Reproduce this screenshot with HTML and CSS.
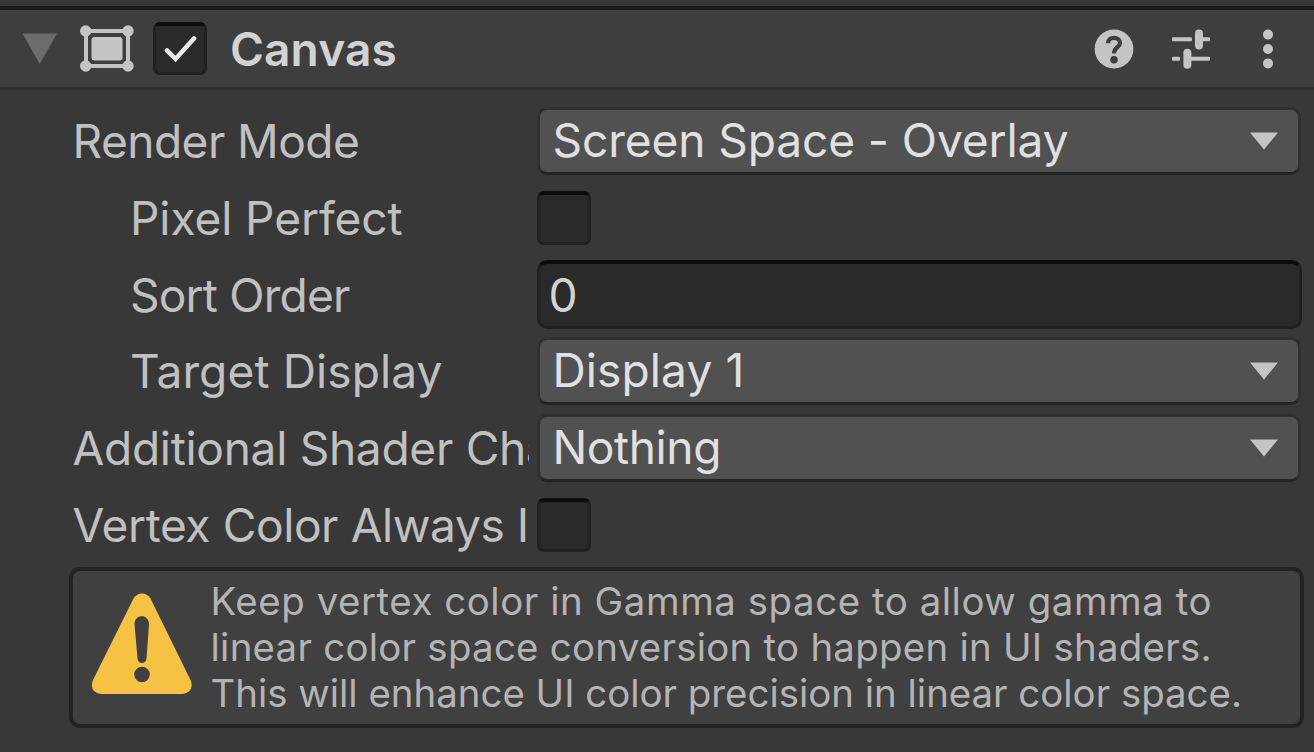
FILE: index.html
```html
<!DOCTYPE html>
<html lang="en">
<head>
<meta charset="utf-8">
<title>Canvas</title>
<link rel="stylesheet" href="styles.css">
</head>
<body>
<main class="inspector">
  <header class="header">
    <svg class="foldout" width="36" height="32" viewBox="0 0 36 32"><path d="M0.5 0.5H35L17.7 31Z" fill="#6c6c6c"/></svg>
    <svg class="canvas-icon" width="54" height="48" viewBox="0 0 54 48">
      <g fill="#c4c4c4"><circle cx="5.700" cy="6" r="5.700"/><circle cx="48" cy="6" r="5.700"/><circle cx="5.700" cy="41" r="5.700"/><circle cx="48" cy="41" r="5.700"/><rect x="11.500" y="12" width="31" height="23.500" rx="3"/></g>
      <rect x="6" y="6" width="42" height="35" fill="none" stroke="#c4c4c4" stroke-width="4"/>
    </svg>
    <span class="checkbox"><svg width="34" height="28" viewBox="0 0 34 28"><path d="M4 15.500L12.500 24L31 3.500" fill="none" stroke="#e8e8e8" stroke-width="4.600" stroke-linecap="round"/></svg></span>
    <h1 class="title">Canvas</h1>
    <svg class="help" width="40" height="40" viewBox="0 0 40 40"><circle cx="20" cy="20" r="19.400" fill="#c4c4c4"/><path d="M14 14.200C14 10.600 16.800 8.800 20 8.800C23.600 8.800 26 11 26 14C26 18.400 20 18.200 20 24.500" fill="none" stroke="#3e3e3e" stroke-width="4.200"/><circle cx="20" cy="30.700" r="3.800" fill="#3e3e3e"/></svg>
    <svg class="presets" width="40" height="40" viewBox="0 0 40 40"><g fill="#c4c4c4"><rect x="1" y="8.300" width="20" height="4" rx="1"/><rect x="28" y="8.300" width="11" height="4" rx="1"/><rect x="24" y="0.500" width="8" height="20" rx="4"/><rect x="1" y="27.700" width="8" height="4" rx="1"/><rect x="16" y="27.700" width="23" height="4" rx="1"/><rect x="12.400" y="19.700" width="8" height="20" rx="4"/></g></svg>
    <svg class="more" width="12" height="40" viewBox="0 0 12 40"><g fill="#c4c4c4"><circle cx="6" cy="5.600" r="5"/><circle cx="6" cy="20" r="5"/><circle cx="6" cy="34.400" r="5"/></g></svg>
  </header>
  <section class="fields">
    <div class="row"><span class="label render-mode">Render Mode</span><div class="dropdown"><span>Screen Space - Overlay</span><svg width="28" height="18" viewBox="0 0 28 18"><path d="M0 0.500H28L14 17.500Z" fill="#c4c4c4"/></svg></div></div>
    <div class="row"><span class="label nested">Pixel Perfect</span><span class="checkbox"></span></div>
    <div class="row"><span class="label nested sort-order">Sort Order</span><div class="input">0</div></div>
    <div class="row"><span class="label nested target-display">Target Display</span><div class="dropdown"><span class="display-value">Display 1</span><svg width="28" height="18" viewBox="0 0 28 18"><path d="M0 0.500H28L14 17.500Z" fill="#c4c4c4"/></svg></div></div>
    <div class="row"><span class="label shader-channels">Additional Shader Channels</span><div class="dropdown"><span class="channels-value">Nothing</span><svg width="28" height="18" viewBox="0 0 28 18"><path d="M0 0.500H28L14 17.500Z" fill="#c4c4c4"/></svg></div></div>
    <div class="row"><span class="label vertex-color">Vertex Color Always In Gamma Color Space</span><span class="checkbox"></span></div>
  </section>
  <aside class="notice">
    <svg class="warning" width="102" height="102" viewBox="0 0 102 102"><path d="M42.500 5.500Q46 0.500 51 0.500Q56 0.500 59.500 5.500L100 88Q103 99 92 101H10Q-1.500 99 1.500 88Z" fill="#f5c244"/><path d="M43.500 31C43.500 20.500 58 20.500 58 31L55.500 65.500C55 71.500 47 71.500 46.500 65.500Z" fill="#404040"/><circle cx="51" cy="81.500" r="7.800" fill="#404040"/></svg>
    <p class="message"><span class="line-1">Keep vertex color in Gamma space to allow gamma to</span><br><span class="line-2">linear color space conversion to happen in UI shaders.</span><br><span class="line-3">This will enhance UI color precision in linear color space.</span></p>
  </aside>
</main>
</body>
</html>
```
FILE: styles.css
```css
* { box-sizing: border-box; }

body {
  margin: 0;
  background: #383838;
  color: #c0c0c0;
  font-family: Inter, "Liberation Sans", sans-serif;
}

svg { display: block; flex: none; }

.inspector {
  height: 752px;
  padding-top: 6px;
  overflow: hidden;
}

.header {
  display: flex;
  align-items: center;
  height: 84px;
  padding: 0 40px 0 22px;
  border-top: 4px solid #1a1a1a;
  border-bottom: 3px solid #303030;
  background: #3e3e3e;
}

.canvas-icon { margin-left: 22px; }

.header .checkbox { margin-left: 19px; }

.title {
  flex: 1;
  margin: 0 0 0 23.5px;
  color: #d2d2d2;
  font-size: 46.08px;
  font-weight: 600;
  line-height: 56px;
  letter-spacing: 0.1px;
}

.presets { margin-left: 37px; }
.more { margin-left: 51px; }

.fields {
  display: grid;
  grid-auto-rows: 69.12px;
  row-gap: 7.68px;
  padding: 16.5px 12px 0 73px;
}

.row {
  display: grid;
  grid-template-columns: 456px minmax(0, 1fr);
  column-gap: 8px;
  align-items: center;
  font-size: 46.08px;
  line-height: 56px;
}

.label {
  overflow: hidden;
  white-space: nowrap;
  letter-spacing: -0.1px;
  text-indent: -0.5px;
}

.nested { padding-left: 57.5px; }

.render-mode { letter-spacing: -0.55px; }
.sort-order { letter-spacing: -0.8px; }
.target-display { letter-spacing: 0.1px; }
.shader-channels { letter-spacing: -0.3px; }
.vertex-color { letter-spacing: -0.4px; }

.checkbox {
  display: grid;
  place-items: center;
  width: 53.5px;
  height: 53.5px;
  border: 3px solid #212121;
  border-top: 4px solid #0d0d0d;
  border-radius: 7px;
  background: #2a2a2a;
}

.dropdown {
  display: flex;
  align-items: center;
  justify-content: space-between;
  height: 68px;
  margin-right: 1px;
  padding: 0 20px 3px 12.5px;
  border: 3px solid #303030;
  border-bottom-color: #242424;
  border-radius: 10px;
  background: #515151;
  color: #e0e0e0;
  letter-spacing: -0.1px;
}

.display-value { letter-spacing: 0.1px; }
.channels-value { letter-spacing: -0.4px; }

.dropdown svg { margin-top: 3px; }

.input {
  height: 69px;
  padding: 3px 8.5px;
  border: 3px solid #212121;
  border-top: 4px solid #0d0d0d;
  border-radius: 10px;
  background: #2a2a2a;
  color: #d2d2d2;
}

.notice {
  display: flex;
  align-items: center;
  height: 161px;
  margin: 7px 10px 0 69px;
  padding-left: 17.5px;
  border: 4px solid #232323;
  border-radius: 11px;
  background: #404040;
}

.warning { margin-bottom: 6px; }

.message {
  margin: 0 0 0 18px;
  color: #b4b4b4;
  font-size: 38.4px;
  line-height: 46px;
  white-space: nowrap;
}

.line-1 { letter-spacing: 0.56px; }
.line-2 { letter-spacing: 0.27px; }
.line-3 { letter-spacing: 0; }
```
